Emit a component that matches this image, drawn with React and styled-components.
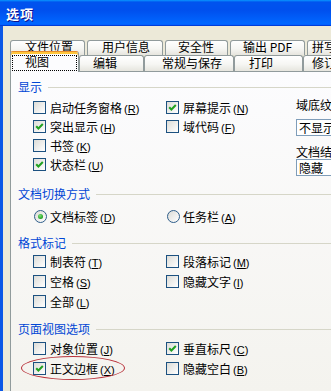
import React from 'react';
import styled, { createGlobalStyle } from 'styled-components';

const Global = createGlobalStyle`
  html, body { margin: 0; padding: 0; width: 331px; height: 391px; overflow: hidden; background: #ECE9D8; }
  #root { width: 331px; height: 391px; }
  * { box-sizing: border-box; }
`;

const FONT = `"Noto Sans CJK SC", "Noto Sans", sans-serif`;

const Window = styled.div`
  position: relative;
  width: 331px;
  height: 391px;
  display: flex;
  flex-direction: column;
  overflow: hidden;
  font-family: ${FONT};
  font-size: 12px;
  color: #000;
`;

const TitleBar = styled.div`
  flex: none;
  height: 26px;
  display: flex;
  align-items: center;
  padding-left: 6px;
  background: linear-gradient(180deg, #0997ff, #0053ee 8%, #0050ee 40%, #0066ff 88%, #0066ff 93%, #005bff 95%, #003dd7 96%, #003dd7);
`;

const Title = styled.span`
  font-weight: 700;
  font-size: 13px;
  color: #fff;
  letter-spacing: 1px;
  text-shadow: 1px 1px #0f1089;
`;

const Body = styled.div`
  flex: 1;
  min-height: 0;
  display: flex;
  flex-direction: column;
  background: #ECE9D8;
  border-left: 3px solid #0b57e6;
  padding: 14px 0 0 7px;
`;

const TabRow = styled.div`
  flex: none;
  display: flex;
  align-items: flex-end;
  gap: ${p => p.$gap}px;
  height: ${p => p.$h}px;
  position: relative;
  z-index: ${p => p.$z};
`;

const Tab = styled.div`
  flex: none;
  width: ${p => p.$w}px;
  height: ${p => p.$h}px;
  padding-left: ${p => p.$pl - 1}px;
  border: 1px solid #919b9c;
  border-bottom: none;
  border-radius: 3px 3px 0 0;
  background: linear-gradient(180deg, #ffffff, #f6f6f3 55%, #e6e5de);
  line-height: ${p => p.$lh}px;
  white-space: nowrap;
`;

const ActiveTab = styled.div`
  flex: none;
  width: ${p => p.$w}px;
  height: 21px;
  margin-bottom: -1px;
  padding: 3px 1px 0 1px;
  border: 1px solid #919b9c;
  border-top-color: #e68b2c;
  border-bottom: none;
  border-radius: 3px 3px 0 0;
  background: #fcfcfe;
  box-shadow: inset 0 2px #ffc73c;
  position: relative;
`;

const Focus = styled.div`
  height: 16px;
  border: 1px dotted #000;
  padding-left: ${p => p.$pl}px;
  line-height: 12px;
  white-space: nowrap;
`;

const Panel = styled.div`
  flex: 1;
  width: 420px;
  border-top: 1px solid #919b9c;
  border-left: 1px solid #919b9c;
  background: linear-gradient(180deg, #fcfcfe, #f4f3ee);
  padding: 8px 0 0 7px;
  display: flex;
  flex-direction: column;
`;

const Group = styled.section`
  margin-top: ${p => p.$mt}px;
  display: flex;
  flex-direction: column;
`;

const Heading = styled.div`
  display: flex;
  align-items: center;
  gap: 6px;
  height: 14px;
  line-height: 14px;
  color: #0046d5;
  white-space: nowrap;
  &::after {
    content: '';
    flex: 1;
    height: 1px;
    background: #d6d6c8;
  }
`;

const GroupBody = styled.div`
  display: flex;
  padding-left: 15px;
  margin-top: ${p => p.$mt}px;
`;

const Column = styled.div`
  flex: none;
  width: ${p => p.$w}px;
  display: flex;
  flex-direction: column;
`;

const Option = styled.div`
  display: flex;
  align-items: center;
  gap: 4px;
  height: ${p => p.$h}px;
  white-space: nowrap;
`;

const Box = styled.span`
  flex: none;
  width: 13px;
  height: 13px;
  border: 1px solid #1c5180;
  background: linear-gradient(135deg, #dcdcd7, #ffffff);
  display: flex;
  align-items: center;
  justify-content: center;
`;

const Radio = styled.span`
  flex: none;
  width: 13px;
  height: 13px;
  margin-left: 1px;
  margin-right: -1px;
  border-radius: 50%;
  border: 1px solid #2e5d8a;
  background: linear-gradient(135deg, #dcdcd7, #ffffff);
  display: flex;
  align-items: center;
  justify-content: center;
`;

const Dot = styled.span`
  width: 5px;
  height: 5px;
  border-radius: 50%;
  background: radial-gradient(circle at 40% 35%, #7ee07a, #21a121 70%);
`;

const Key = styled.span`
  font-family: "Liberation Sans", Arial, sans-serif;
  font-size: 11px;
  margin-left: 2px;
  & u { text-decoration: underline; }
`;

const SideLabel = styled.div`
  height: 14px;
  line-height: 14px;
  margin-top: ${p => p.$mt}px;
  white-space: nowrap;
`;

const Select = styled.div`
  width: 80px;
  height: 17px;
  margin-top: ${p => p.$mt}px;
  border: 1px solid #7f9db9;
  background: #fff;
  padding-left: 2px;
  line-height: 15px;
  white-space: nowrap;
`;

const Ellipse = styled.div`
  position: absolute;
  left: 21px;
  top: 356px;
  width: 104px;
  height: 24px;
  border: 1px solid #b8313a;
  border-radius: 50%;
  pointer-events: none;
`;

const Check = () => (
  <svg width="11" height="11" viewBox="0 0 11 11">
    <polyline points="2.2,5.2 4.4,7.5 8.8,3" fill="none" stroke="#21a121" strokeWidth="2" />
  </svg>
);

const CheckItem = ({ label, k, checked, h = 19 }) => (
  <Option $h={h}>
    <Box>{checked && <Check />}</Box>
    <span>
      {label}
      <Key>(<u>{k}</u>)</Key>
    </span>
  </Option>
);

const RadioItem = ({ label, k, checked, h = 20 }) => (
  <Option $h={h}>
    <Radio>{checked && <Dot />}</Radio>
    <span>
      {label}
      <Key>(<u>{k}</u>)</Key>
    </span>
  </Option>
);

export default function App() {
  return (
    <Window>
      <Global />
      <TitleBar>
        <Title>选项</Title>
      </TitleBar>
      <Body>
        <TabRow $gap={2} $h={15} $z={1}>
          <Tab $w={75} $h={15} $pl={15} $lh={11}>文件位置</Tab>
          <Tab $w={76} $h={15} $pl={15} $lh={11}>用户信息</Tab>
          <Tab $w={63} $h={15} $pl={13} $lh={11}>安全性</Tab>
          <Tab $w={75} $h={15} $pl={13} $lh={11}>输出 PDF</Tab>
          <Tab $w={60} $h={15} $pl={5} $lh={11}>拼写</Tab>
        </TabRow>
        <TabRow $gap={0} $h={16} $z={2}>
          <ActiveTab $w={69}>
            <Focus $pl={12}>视图</Focus>
          </ActiveTab>
          <Tab $w={65} $h={16} $pl={14} $lh={14}>编辑</Tab>
          <Tab $w={90} $h={16} $pl={18} $lh={14}>常规与保存</Tab>
          <Tab $w={69} $h={16} $pl={15} $lh={14}>打印</Tab>
          <Tab $w={60} $h={16} $pl={9} $lh={14}>修订</Tab>
        </TabRow>
        <Panel>
          <Group $mt={0}>
            <Heading>显示</Heading>
            <GroupBody $mt={4}>
              <Column $w={133}>
                <CheckItem label="启动任务窗格" k="R" />
                <CheckItem label="突出显示" k="H" checked />
                <CheckItem label="书签" k="K" />
                <CheckItem label="状态栏" k="U" checked />
              </Column>
              <Column $w={130}>
                <CheckItem label="屏幕提示" k="N" checked />
                <CheckItem label="域代码" k="F" />
              </Column>
              <Column $w={120}>
                <SideLabel $mt={0}>域底纹</SideLabel>
                <Select $mt={7}>不显示</Select>
                <SideLabel $mt={9}>文档结构图</SideLabel>
                <Select $mt={0}>隐藏</Select>
              </Column>
            </GroupBody>
          </Group>
          <Group $mt={11}>
            <Heading>文档切换方式</Heading>
            <GroupBody $mt={5}>
              <Column $w={133}>
                <RadioItem label="文档标签" k="D" checked />
              </Column>
              <Column $w={130}>
                <RadioItem label="任务栏" k="A" />
              </Column>
            </GroupBody>
          </Group>
          <Group $mt={10}>
            <Heading>格式标记</Heading>
            <GroupBody $mt={1}>
              <Column $w={133}>
                <CheckItem h={20} label="制表符" k="T" />
                <CheckItem h={20} label="空格" k="S" />
                <CheckItem h={20} label="全部" k="L" />
              </Column>
              <Column $w={130}>
                <CheckItem h={20} label="段落标记" k="M" />
                <CheckItem h={20} label="隐藏文字" k="I" />
              </Column>
            </GroupBody>
          </Group>
          <Group $mt={11}>
            <Heading>页面视图选项</Heading>
            <GroupBody $mt={2}>
              <Column $w={133}>
                <CheckItem h={20} label="对象位置" k="J" />
                <CheckItem h={20} label="正文边框" k="X" checked />
              </Column>
              <Column $w={130}>
                <CheckItem h={20} label="垂直标尺" k="C" checked />
                <CheckItem h={20} label="隐藏空白" k="B" />
              </Column>
            </GroupBody>
          </Group>
        </Panel>
      </Body>
      <Ellipse />
    </Window>
  );
}
